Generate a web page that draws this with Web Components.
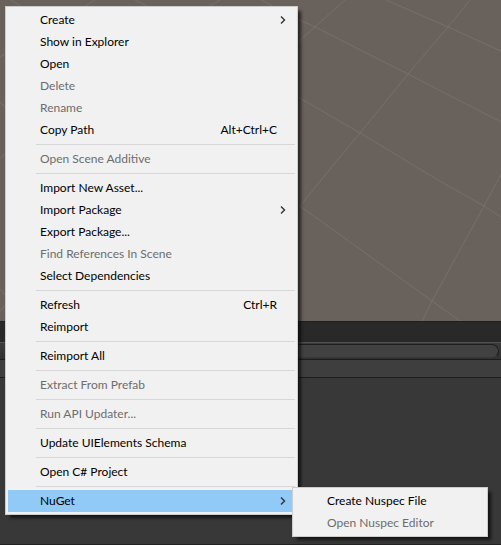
<!DOCTYPE html>
<html lang="en">
<head>
<meta charset="utf-8">
<title>Project context menu</title>
<style>
html, body { height: 100%; margin: 0; }
body { font: 12px/22px Lato, "Noto Sans", sans-serif; overflow: hidden; background: #383838; }
</style>
</head>
<body>
<editor-window>
  <scene-view></scene-view>
  <project-panel></project-panel>
  <context-menu slot="menu" label="Project">
    <menu-item submenu>Create</menu-item>
    <menu-item>Show in Explorer</menu-item>
    <menu-item>Open</menu-item>
    <menu-item disabled>Delete</menu-item>
    <menu-item disabled>Rename</menu-item>
    <menu-item shortcut="Alt+Ctrl+C">Copy Path</menu-item>
    <menu-separator></menu-separator>
    <menu-item disabled>Open Scene Additive</menu-item>
    <menu-separator></menu-separator>
    <menu-item>Import New Asset...</menu-item>
    <menu-item submenu>Import Package</menu-item>
    <menu-item>Export Package...</menu-item>
    <menu-item disabled>Find References In Scene</menu-item>
    <menu-item>Select Dependencies</menu-item>
    <menu-separator></menu-separator>
    <menu-item shortcut="Ctrl+R">Refresh</menu-item>
    <menu-item>Reimport</menu-item>
    <menu-separator></menu-separator>
    <menu-item>Reimport All</menu-item>
    <menu-separator></menu-separator>
    <menu-item disabled>Extract From Prefab</menu-item>
    <menu-separator></menu-separator>
    <menu-item disabled>Run API Updater...</menu-item>
    <menu-separator></menu-separator>
    <menu-item>Update UIElements Schema</menu-item>
    <menu-separator></menu-separator>
    <menu-item>Open C# Project</menu-item>
    <menu-separator></menu-separator>
    <menu-item submenu active>NuGet
      <context-menu slot="submenu" label="NuGet">
        <menu-item>Create Nuspec File</menu-item>
        <menu-item disabled>Open Nuspec Editor</menu-item>
      </context-menu>
    </menu-item>
  </context-menu>
</editor-window>
<script>
const define = (name, html, setup) => {
  const template = document.createElement('template');
  template.innerHTML = html;
  customElements.define(name, class extends HTMLElement {
    constructor() {
      super();
      this.attachShadow({ mode: 'open' }).append(template.content.cloneNode(true));
    }
    connectedCallback() { if (setup) setup(this, this.shadowRoot); }
  });
};

define('editor-window', `
<style>
:host { display: flex; flex-direction: column; height: 100vh; position: relative; }
::slotted(scene-view) { flex: 321 1 0; }
::slotted(project-panel) { flex: 224 1 0; }
::slotted(context-menu) { position: absolute; left: 5px; top: 6px; width: 293px; }
</style>
<slot></slot><slot name="menu"></slot>`);

define('scene-view', `
<style>
:host { display: block; overflow: hidden; background: #69615c; }
svg { display: block; fill: none; stroke: #7c7c7a; stroke-opacity: .6; stroke-width: 1; }
</style>
<svg width="501" height="321" viewBox="0 0 501 321" aria-hidden="true">
  <path d="M386 0 448 27 501 51M261 0 298 19 315 27 408 74 501 122M298 97 360 133 438 180 484 206 501 217M300 206 432 301 460 321"/>
  <path d="M470 0 448 27 408 74 360 133 321 180 300 206M345 0 315 27 298 42M501 174 484 206 432 301 422 321"/>
  <path d="M11 0 20 6M95 0 85 6M135 0 147 6M220 0 210 6M0 57 5 54M0 102 5 107M0 158 5 154M0 289 5 295M0 311 5 306"/>
</svg>`);

define('project-panel', `
<style>
:host { display: flex; flex-direction: column; background: #383838; box-shadow: inset 0 -1px #222; }
.tabs { height: 20px; border-top: 1px solid #202020; background: #292929; }
.bar { height: 15px; padding: 1px 2px 0 12px; border-top: 1px solid #505050; border-bottom: 1px solid #1d1d1d; background: linear-gradient(#3c3c3c, #303030); }
.search { height: 12px; border: 1px solid #1e1e1e; border-bottom-color: #383838; border-radius: 7px; background: #414141; }
.path { height: 17px; border-bottom: 1px solid #1d1d1d; background: #3e3e3e; }
</style>
<div class="tabs"></div><div class="bar"><div class="search"></div></div><div class="path"></div>`);

define('context-menu', `
<style>
:host { display: block; box-sizing: border-box; padding: 2px; border: 1px solid #ccc; background: #f1f1f1; color: #000; box-shadow: 4px 4px 3px -1px #000000a0; }
</style>
<slot></slot>`, (host) => {
  host.setAttribute('role', 'menu');
  host.setAttribute('aria-label', host.getAttribute('label'));
});

define('menu-separator', `
<style>
:host { display: block; padding: 3px 0; margin-left: 28px; }
hr { margin: 0; border: 0; height: 1px; background: #d7d7d7; }
</style>
<hr>`);

define('menu-item', `
<style>
:host { display: block; position: relative; }
button { display: flex; align-items: center; width: 100%; height: 22px; padding: 0 9px 0 32px; border: 0; background: none; color: inherit; font: inherit; text-align: left; white-space: nowrap; }
button:disabled { color: #6d6d6d; }
:host([active]) button { background: #91c9f7; }
.label { flex: 1; }
.keys { padding-right: 9px; }
.keys:empty { display: none; }
svg { display: none; width: 6px; height: 8px; fill: none; stroke: #333; stroke-width: 1.4; }
:host([submenu]) svg { display: block; }
::slotted(context-menu) { position: absolute; left: calc(100% - 3px); top: -3px; width: 196px; z-index: 1; }
</style>
<button type="button" role="menuitem"><span class="label"><slot></slot></span><span class="keys"></span><svg viewBox="0 0 6 8" aria-hidden="true"><path d="M1 .5 4.5 4 1 7.5"/></svg></button>
<slot name="submenu"></slot>`, (host, root) => {
  const button = root.querySelector('button');
  button.disabled = host.hasAttribute('disabled');
  root.querySelector('.keys').textContent = host.getAttribute('shortcut') || '';
  if (host.hasAttribute('submenu')) {
    button.setAttribute('aria-haspopup', 'menu');
    button.setAttribute('aria-expanded', host.hasAttribute('active'));
  }
});
</script>
</body>
</html>
